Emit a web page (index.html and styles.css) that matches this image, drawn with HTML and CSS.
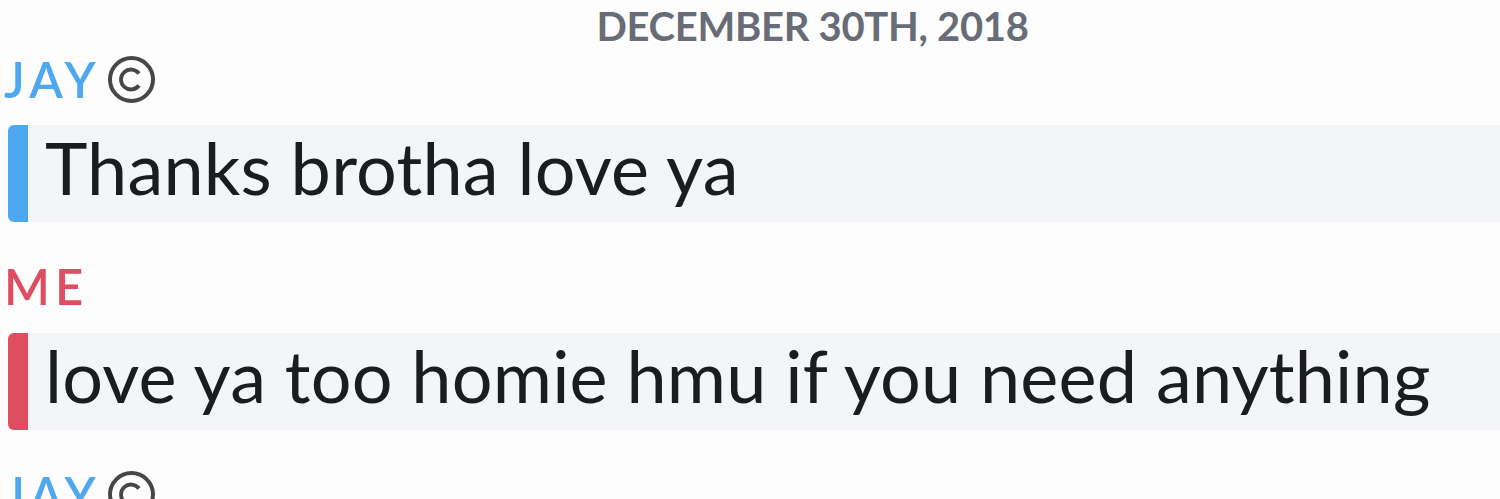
FILE: index.html
```html
<!DOCTYPE html>
<html lang="en">
  <head>
    <meta charset="UTF-8" />
    <meta name="viewport" content="width=device-width, initial-scale=1.0" />
    <title>Chat</title>
    <link rel="stylesheet" href="styles.css">
  </head>
  <body>
    <div class="chat">
      <div class="date">DECEMBER 30TH, 2018</div>

      <!-- Jay -->
      <div class="sender jay">
        <span>JAY</span>
        <svg class="badge" width="49" height="49" viewBox="0 0 49 49">
          <circle cx="24.5" cy="24.5" r="21.5" fill="none" stroke="#474747" stroke-width="4" />
          <path d="M32 18.5 A10 10 0 1 0 32 30.5" fill="none" stroke="#474747" stroke-width="3.8" />
        </svg>
      </div>
      <div class="message jay">
        <div class="bar"></div>
        <div class="text">Thanks brotha love ya</div>
      </div>

      <!-- Me -->
      <div class="sender me">
        <span>ME</span>
      </div>
      <div class="message me">
        <div class="bar"></div>
        <div class="text">love ya too homie hmu if you need anything</div>
      </div>

      <div class="sender jay">
        <span>JAY</span>
        <svg class="badge" width="49" height="49" viewBox="0 0 49 49">
          <circle cx="24.5" cy="24.5" r="21.5" fill="none" stroke="#474747" stroke-width="4" />
          <path d="M32 18.5 A10 10 0 1 0 32 30.5" fill="none" stroke="#474747" stroke-width="3.8" />
        </svg>
      </div>
    </div>
  </body>
</html>
```

FILE: styles.css
```css
body {
  margin: 0;
  background-color: #fdfdfd;
  font-family: Lato, "Noto Sans", sans-serif;
  overflow: hidden;
}
.chat {
  display: flex;
  flex-direction: column;
}
.date {
  margin-top: 1px;
  padding-left: 125px;
  text-align: center;
  font-size: 40px;
  line-height: 50px;
  font-weight: 700;
  letter-spacing: -0.3px;
  color: #676c76;
}
.sender {
  display: flex;
  align-items: center;
  gap: 6px;
  padding-left: 4px;
  height: 56px;
  font-size: 49px;
  line-height: 56px;
  font-weight: 600;
  letter-spacing: 5px;
}
.sender.jay {
  color: #4ea8f1;
}
.sender.me {
  color: #df4d61;
  margin-top: 36px;
}
.message {
  display: flex;
  margin-top: 18px;
  margin-left: 8px;
  background-color: #f4f5f9;
  height: 97px;
}
.message.me {
  margin-top: 19px;
}
.message + .sender.jay {
  margin-top: 36px;
}
.bar {
  width: 20px;
  border-radius: 6px 0 0 6px;
}
.message.jay .bar {
  background-color: #4ea8f1;
}
.message.me .bar {
  background-color: #df4d61;
}
.text {
  padding-left: 17px;
  font-size: 72px;
  line-height: 85px;
  letter-spacing: 0.2px;
  color: #1b1c20;
}
```
